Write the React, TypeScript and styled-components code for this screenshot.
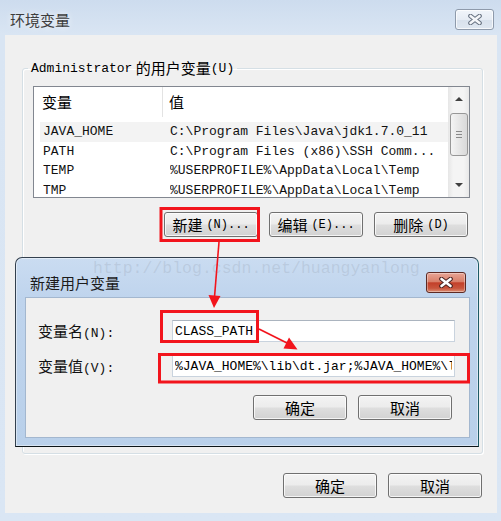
import React from 'react'
import styled, { createGlobalStyle } from 'styled-components'

const CN = `"Noto Sans CJK SC", "Noto Sans", sans-serif`
const MONO = `"Liberation Mono", "Noto Sans CJK SC", monospace`

const GlobalStyle = createGlobalStyle`
  html, body { margin: 0; padding: 0; }
  body {
    font-family: ${CN};
    font-size: 15px;
    color: #000;
    background: #dae6f4;
  }
  * { box-sizing: border-box; }
`

const Window = styled.div`
  position: relative;
  width: 501px;
  height: 521px;
  display: flex;
  flex-direction: column;
  padding-bottom: 8px;
  background: linear-gradient(#cddcee 0px, #d9e5f3 34px, #dae6f4 100%);
  overflow: hidden;
`

const TitleBar = styled.div`
  height: 35px;
  flex: none;
  display: flex;
  align-items: flex-start;
  justify-content: space-between;
  padding: 0 7px 0 10px;
`

const TitleText = styled.span`
  margin-top: 11px;
  font-size: 15px;
  line-height: 18px;
  color: #3d3d3d;
  text-shadow: 0 0 6px rgba(255, 255, 255, 0.9);
`

const CaptionButton = styled.div<{ $red?: boolean }>`
  width: ${p => (p.$red ? 40 : 39)}px;
  height: 21px;
  margin-top: ${p => (p.$red ? 14 : 9)}px;
  border-radius: 3px;
  display: flex;
  align-items: center;
  justify-content: center;
  border: 1px solid ${p => (p.$red ? '#5d2a24' : '#8e9aab')};
  background: ${p =>
    p.$red
      ? 'linear-gradient(#e8a596 0%, #d9806a 45%, #c3402a 52%, #c9553c 80%, #dc8f75 100%)'
      : 'linear-gradient(#f1f5fa 0%, #e6ecf4 50%, #d8e1ec 52%, #dfe7f1 100%)'};
  box-shadow: inset 0 0 0 1px rgba(255, 255, 255, ${p => (p.$red ? 0.35 : 0.7)});
`

const CloseGlyph = ({ edge, fill }: { edge: string; fill: string }) => (
  <svg width="16" height="11" viewBox="0 0 16 11">
    <path d="M3.5 2 L12.5 9 M12.5 2 L3.5 9" stroke={edge} strokeWidth="4.6" strokeLinecap="round" fill="none" />
    <path d="M3.5 2 L12.5 9 M12.5 2 L3.5 9" stroke={fill} strokeWidth="2.6" strokeLinecap="round" fill="none" />
  </svg>
)

const Client = styled.div`
  flex: 1;
  margin: 0 4px 0 5px;
  background: #f0f0f0;
  padding: 24px 14px 0 17px;
  display: flex;
  flex-direction: column;
`

const Group = styled.fieldset`
  margin: 0;
  height: 395px;
  padding: 9px 12px 0 10px;
  border: 1px solid #d5dfe5;
  border-radius: 3px;
  box-shadow: inset 1px 1px 0 #fff, 1px 1px 0 #fff;
  min-inline-size: 0;
`

const Legend = styled.legend`
  margin-left: -5px;
  padding: 0 3px;
  height: 18px;
  line-height: 18px;
  font-size: 15px;
  white-space: nowrap;
  display: flex;
  align-items: center;
`

const Key = styled.span<{ $size?: number }>`
  font-family: ${MONO};
  font-size: ${p => p.$size ?? 13}px;
  line-height: 1;
`

const ListView = styled.div`
  height: 112px;
  border: 1px solid #828790;
  background: #fff;
  display: flex;
  overflow: hidden;
`

const ListMain = styled.div`
  flex: 1;
  min-width: 0;
  display: flex;
  flex-direction: column;
`

const HeaderRow = styled.div`
  height: 30px;
  flex: none;
  display: grid;
  grid-template-columns: 129px 1fr;
`

const HeaderCell = styled.div<{ $first?: boolean }>`
  display: flex;
  align-items: center;
  padding-left: ${p => (p.$first ? 8 : 6)}px;
  font-size: 15px;
  line-height: 18px;
  border-right: ${p => (p.$first ? '1px solid #e3e3e3' : 'none')};
`

const Rows = styled.div`
  padding-top: 5px;
`

const Row = styled.div<{ $hot?: boolean }>`
  height: 19.5px;
  margin-left: 6px;
  padding-left: 3px;
  display: grid;
  grid-template-columns: 127px 1fr;
  align-items: center;
  background: ${p => (p.$hot ? '#f3f3f3' : 'transparent')};
  font-family: ${MONO};
  font-size: 13px;
  color: #111;
  white-space: nowrap;
`

const Cell = styled.span`
  overflow: hidden;
  line-height: 19px;
`

const ScrollBar = styled.div`
  width: 21px;
  flex: none;
  display: flex;
  flex-direction: column;
  align-items: center;
  background: linear-gradient(90deg, #e6e6e6, #f4f4f4 25%, #f4f4f4 75%, #e8e8e8);
`

const ScrollArrow = styled.div<{ $down?: boolean }>`
  height: 24px;
  width: 100%;
  flex: none;
  display: flex;
  align-items: center;
  justify-content: center;
  &::after {
    content: '';
    border-left: 4px solid transparent;
    border-right: 4px solid transparent;
    ${p => (p.$down ? 'border-top: 4px solid #404040;' : 'border-bottom: 4px solid #404040;')}
  }
`

const ScrollTrack = styled.div`
  flex: 1;
  width: 100%;
  display: flex;
  justify-content: center;
`

const ScrollThumb = styled.div`
  width: 18px;
  height: 43px;
  margin-top: 2px;
  border: 1px solid #979797;
  border-radius: 3px;
  background: linear-gradient(90deg, #f4f4f4, #e6e6e6 50%, #d9d9d9);
  display: flex;
  flex-direction: column;
  align-items: center;
  justify-content: center;
  gap: 2px;
`

const Grip = styled.i`
  display: block;
  width: 6px;
  height: 1px;
  background: #8a8a8a;
`

const ButtonRow = styled.div<{ $top: number; $right: number }>`
  display: flex;
  justify-content: flex-end;
  gap: 11px;
  margin-top: ${p => p.$top}px;
  margin-right: ${p => p.$right}px;
`

const Button = styled.button`
  width: 94px;
  height: 25px;
  padding: 0;
  margin: 0;
  border: 1px solid #707070;
  border-radius: 3px;
  background: linear-gradient(#f3f3f3 0%, #ececec 48%, #dedede 52%, #d2d2d2 100%);
  box-shadow: inset 0 0 0 1px rgba(255, 255, 255, 0.75);
  font-family: ${CN};
  font-size: 15px;
  line-height: 18px;
  color: #000;
  display: flex;
  align-items: center;
  justify-content: center;
  gap: 4px;
`

const Dialog = styled.div`
  position: absolute;
  left: 15px;
  top: 257px;
  width: 464px;
  height: 190px;
  display: flex;
  flex-direction: column;
  padding: 0 8px 8px 9px;
  border: 1px solid #33404e;
  border-bottom-color: #0c1418;
  border-right-color: #1d5a66;
  border-radius: 7px 7px 0 0;
  background: linear-gradient(#cadcf1 0px, #bfd4ed 40px, #b9d0ea 100%);
  box-shadow: inset 0 0 0 1px rgba(255, 255, 255, 0.45);
`

const DialogTitleBar = styled.div`
  height: 39px;
  flex: none;
  display: flex;
  align-items: flex-start;
  justify-content: space-between;
  padding: 0 4px 0 5px;
`

const DialogTitle = styled.span`
  margin-top: 16px;
  font-size: 15px;
  line-height: 18px;
  color: #1b1b1b;
`

const DialogClient = styled.div`
  flex: 1;
  background: #f0f0f0;
  border: 1px solid #a3b7cf;
  padding: 22px 14px 0 12px;
  display: flex;
  flex-direction: column;
`

const FieldGrid = styled.div`
  display: grid;
  grid-template-columns: 134px 1fr;
  row-gap: 13px;
  align-items: center;
`

const FieldLabel = styled.label`
  font-size: 15px;
  line-height: 18px;
  color: #111;
  white-space: nowrap;
`

const TextBox = styled.input`
  height: 22px;
  width: 100%;
  margin: 0;
  padding: 0 2px;
  border: 1px solid #c9d3de;
  border-top-color: #abb4bf;
  background: #fff;
  font-family: ${MONO};
  font-size: 13px;
  color: #000;
  outline: none;
`

const Overlay = styled.svg`
  position: absolute;
  left: 0;
  top: 0;
  pointer-events: none;
`

const RED = '#f2141c'

export default function App() {
  return (
    <>
      <GlobalStyle />
      <Window>
        <TitleBar>
          <TitleText>环境变量</TitleText>
          <CaptionButton>
            <CloseGlyph edge="#65707f" fill="#f4f6f9" />
          </CaptionButton>
        </TitleBar>

        <Client>
          <Group>
            <Legend>
              <Key>Administrator</Key>&nbsp;的用户变量<Key>(U)</Key>
            </Legend>
            <ListView>
              <ListMain>
                <HeaderRow>
                  <HeaderCell $first>变量</HeaderCell>
                  <HeaderCell>值</HeaderCell>
                </HeaderRow>
                <Rows>
                  <Row $hot>
                    <Cell>JAVA_HOME</Cell>
                    <Cell>C:\Program Files\Java\jdk1.7.0_11</Cell>
                  </Row>
                  <Row>
                    <Cell>PATH</Cell>
                    <Cell>C:\Program Files (x86)\SSH Comm...</Cell>
                  </Row>
                  <Row>
                    <Cell>TEMP</Cell>
                    <Cell>%USERPROFILE%\AppData\Local\Temp</Cell>
                  </Row>
                  <Row>
                    <Cell>TMP</Cell>
                    <Cell>%USERPROFILE%\AppData\Local\Temp</Cell>
                  </Row>
                </Rows>
              </ListMain>
              <ScrollBar>
                <ScrollArrow />
                <ScrollTrack>
                  <ScrollThumb>
                    <Grip />
                    <Grip />
                    <Grip />
                  </ScrollThumb>
                </ScrollTrack>
                <ScrollArrow $down />
              </ScrollBar>
            </ListView>
            <ButtonRow $top={14} $right={2}>
              <Button>新建<Key $size={12}>(N)...</Key></Button>
              <Button>编辑<Key $size={12}>(E)...</Key></Button>
              <Button>删除<Key $size={12}>(D)</Key></Button>
            </ButtonRow>
          </Group>

          <ButtonRow $top={19} $right={1}>
            <Button>确定</Button>
            <Button>取消</Button>
          </ButtonRow>
        </Client>

        <Dialog>
          <DialogTitleBar>
            <DialogTitle>新建用户变量</DialogTitle>
            <CaptionButton $red>
              <CloseGlyph edge="#4a2220" fill="#ffffff" />
            </CaptionButton>
          </DialogTitleBar>
          <DialogClient>
            <FieldGrid>
              <FieldLabel>变量名<Key>(N):</Key></FieldLabel>
              <TextBox readOnly defaultValue="CLASS_PATH" />
              <FieldLabel>变量值<Key>(V):</Key></FieldLabel>
              <TextBox readOnly defaultValue="%JAVA_HOME%\lib\dt.jar;%JAVA_HOME%\lib\tools.jar" />
            </FieldGrid>
            <ButtonRow $top={18} $right={3}>
              <Button>确定</Button>
              <Button>取消</Button>
            </ButtonRow>
          </DialogClient>
        </Dialog>

        <Overlay width="501" height="521" viewBox="0 0 501 521">
          <text
            x="93"
            y="273"
            fontFamily='"Liberation Mono", monospace'
            fontSize="16.5"
            fill="rgba(150,162,178,0.28)"
          >
            http://blog.csdn.net/huangyanlong
          </text>
          <rect x="161" y="208.5" width="97.5" height="32" fill="none" stroke={RED} strokeWidth="3" />
          <path d="M219 242 L214.5 297" stroke={RED} strokeWidth="1.6" fill="none" />
          <path d="M208.5 295 L220.5 296 L214 308 Z" fill={RED} />
          <rect x="161.5" y="311.5" width="96" height="30" fill="none" stroke={RED} strokeWidth="3" />
          <path d="M259 329 L287 343" stroke={RED} strokeWidth="1.6" fill="none" />
          <path d="M283.5 348.5 L289 337.5 L297.5 349.5 Z" fill={RED} />
          <rect x="159.5" y="354.5" width="309" height="27.5" fill="none" stroke={RED} strokeWidth="3" />
        </Overlay>
      </Window>
    </>
  )
}
